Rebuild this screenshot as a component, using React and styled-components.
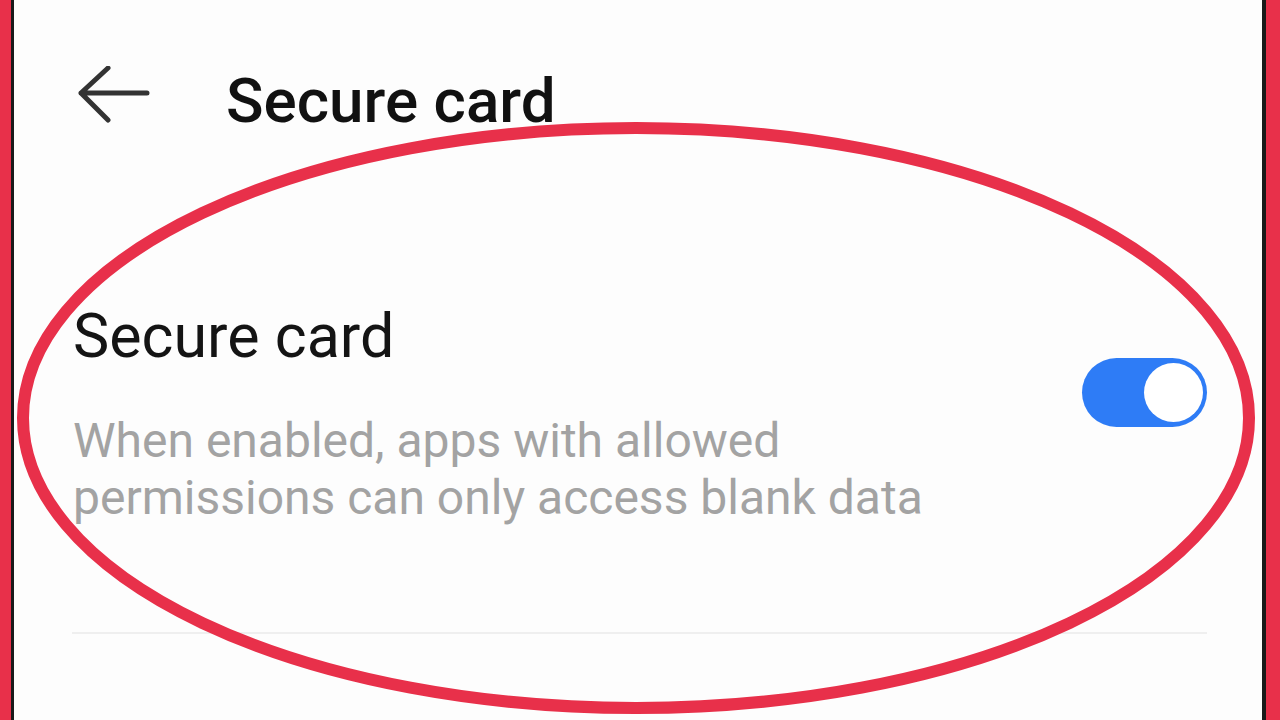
import React from 'react'
import styled, { createGlobalStyle } from 'styled-components'

const GlobalStyle = createGlobalStyle`
  html, body {
    margin: 0;
    padding: 0;
    background: #fdfdfd;
  }
  body {
    font-family: Roboto, "Liberation Sans", sans-serif;
  }
`

const Frame = styled.div`
  position: relative;
  display: flex;
  width: 1280px;
  height: 720px;
  box-sizing: border-box;
  border-left: 11px solid #e8304a;
  border-right: 14px solid #e8304a;
  overflow: hidden;
`

const Screen = styled.div`
  flex: 1;
  display: flex;
  flex-direction: column;
  background: #fdfdfd;
  border-left: 3px solid #1a1a1a;
  border-right: 4px solid #1a1a1a;
`

const Header = styled.div`
  display: flex;
  align-items: flex-start;
  gap: 76px;
  padding: 70px 0 0 64px;
  height: 62px;
`

const BackArrow = styled.svg`
  width: 72px;
  height: 58px;
  margin-top: -4px;
  flex-shrink: 0;
`

const HeaderTitle = styled.h1`
  margin: 0;
  font-size: 62px;
  line-height: 62px;
  font-weight: 500;
  color: #111;
`

const SettingRow = styled.div`
  display: flex;
  align-items: flex-start;
  justify-content: space-between;
  padding: 0 55px 0 59px;
  margin-top: 174px;
`

const SettingText = styled.div`
  display: flex;
  flex-direction: column;
`

const SettingTitle = styled.div`
  font-size: 61px;
  line-height: 61px;
  color: #141414;
`

const SettingHint = styled.div`
  margin-top: 45px;
  font-size: 48px;
  line-height: 57px;
  color: #a3a3a3;
`

const Toggle = styled.div`
  position: relative;
  flex-shrink: 0;
  width: 125px;
  height: 69px;
  margin-top: 52px;
  border-radius: 35px;
  background: ${props => (props.$on ? '#2e7cf6' : '#d5d5d5')};
`

const Knob = styled.div`
  position: absolute;
  top: 5px;
  left: ${props => (props.$on ? '62px' : '5px')};
  width: 59px;
  height: 59px;
  border-radius: 50%;
  background: #fff;
`

const Divider = styled.div`
  height: 2px;
  margin: 106px 55px 0 58px;
  background: #efefef;
`

const Marker = styled.svg`
  position: absolute;
  top: 0;
  left: -11px;
  width: 1280px;
  height: 720px;
  pointer-events: none;
`

const App = () => {
    return (
        <>
            <GlobalStyle />
            <Frame>
                <Screen>
                    <Header>
                        <BackArrow viewBox="0 0 72 58">
                            <path
                                d="M69 27 H3 M30 2 L3 27 L30 54"
                                fill="none"
                                stroke="#333"
                                strokeWidth="5"
                                strokeLinecap="round"
                                strokeLinejoin="round"
                            />
                        </BackArrow>
                        <HeaderTitle>Secure card</HeaderTitle>
                    </Header>

                    <SettingRow>
                        <SettingText>
                            <SettingTitle>Secure card</SettingTitle>
                            <SettingHint>
                                When enabled, apps with allowed
                                <br />
                                permissions can only access blank data
                            </SettingHint>
                        </SettingText>
                        <Toggle $on>
                            <Knob $on />
                        </Toggle>
                    </SettingRow>

                    <Divider />
                </Screen>

                {/* hand-drawn circle around the setting */}
                <Marker viewBox="0 0 1280 720">
                    <ellipse
                        cx="636"
                        cy="418"
                        rx="613"
                        ry="290"
                        fill="none"
                        stroke="#e8304a"
                        strokeWidth="12"
                    />
                </Marker>
            </Frame>
        </>
    )
}

export default App
